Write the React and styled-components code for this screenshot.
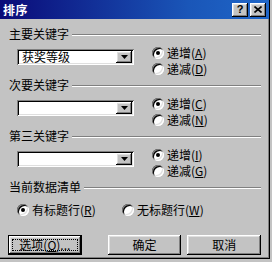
import React from 'react';
import styled, { createGlobalStyle, css } from 'styled-components';

const GlobalStyle = createGlobalStyle`
  html, body {
    margin: 0;
    padding: 0;
    background: #c3c3c3;
  }
  body {
    font-family: "Noto Sans CJK SC", "Liberation Sans", sans-serif;
    font-size: 12px;
    color: #000;
  }
`;

const bevelOut = css`
  box-shadow: inset -1px -1px #000, inset 1px 1px #fff, inset -2px -2px #808080, inset 2px 2px #dfdfdf;
`;

const bevelIn = css`
  box-shadow: inset 1px 1px #808080, inset -1px -1px #fff, inset 2px 2px #000, inset -2px -2px #dfdfdf;
`;

const Window = styled.div`
  width: 270px;
  height: 259px;
  box-sizing: border-box;
  background: #c3c3c3;
  border-right: 1px solid #000;
  border-bottom: 1px solid #000;
  box-shadow: inset -1px -1px #808080;
  display: flex;
  flex-direction: column;
`;

const TitleBar = styled.div`
  height: 19px;
  flex: none;
  display: flex;
  align-items: center;
  padding: 0 3px 0 3px;
  background: linear-gradient(90deg, #0a0a78 0%, #1a56b8 70%, #1f66c8 100%);
`;

const Title = styled.div`
  flex: 1;
  color: #fff;
  font-weight: 700;
  font-size: 12px;
  line-height: 14px;
  letter-spacing: 0.5px;
`;

const TitleButton = styled.div`
  width: 16px;
  height: 14px;
  box-sizing: border-box;
  background: #c3c3c3;
  ${bevelOut};
  display: flex;
  align-items: center;
  justify-content: center;
  margin-left: ${p => p.$gap || 0}px;
  font-family: "Liberation Sans", sans-serif;
  font-weight: 700;
  font-size: 11px;
  line-height: 11px;
  padding-bottom: 1px;
`;

const Content = styled.div`
  padding: 8px 8px 0 8px;
  display: flex;
  flex-direction: column;
`;

const Group = styled.div`
  margin-bottom: 1px;
`;

const Header = styled.div`
  display: flex;
  align-items: center;
  height: 14px;
`;

const HeaderLabel = styled.span`
  font-size: 12px;
  line-height: 14px;
  padding-left: 1px;
`;

const Etch = styled.div`
  flex: 1;
  height: 0;
  margin-left: 3px;
  margin-top: 1px;
  border-top: 1px solid #808080;
  border-bottom: 1px solid #fff;
`;

const GroupBody = styled.div`
  display: flex;
  margin-top: 4px;
  padding-left: 9px;
`;

const Combo = styled.div`
  width: 117px;
  height: 16px;
  margin-top: 4px;
  box-sizing: border-box;
  background: #fff;
  ${bevelIn};
  padding: 2px;
  display: flex;
  align-items: center;
`;

const ComboText = styled.span`
  flex: 1;
  padding-left: 3px;
  font-size: 12px;
  line-height: 12px;
  white-space: nowrap;
`;

const DropButton = styled.div`
  width: 16px;
  height: 12px;
  box-sizing: border-box;
  background: #c3c3c3;
  ${bevelOut};
  display: flex;
  align-items: center;
  justify-content: center;
`;

const RadioColumn = styled.div`
  display: flex;
  flex-direction: column;
  margin-left: 18px;
`;

const RadioRow = styled.div`
  display: flex;
  align-items: center;
  height: 16px;
  width: ${p => (p.$width ? `${p.$width}px` : 'auto')};
  flex: none;
`;

const RadioCircle = styled.span`
  width: 12px;
  height: 12px;
  flex: none;
  border-radius: 50%;
  background: #fff;
  box-shadow: inset 1px 1px #808080, inset -1px -1px #fff, inset 2px 2px #000, inset -2px -2px #dfdfdf;
  display: flex;
  align-items: center;
  justify-content: center;
  &::after {
    content: '';
    width: 4px;
    height: 4px;
    border-radius: 50%;
    background: ${p => (p.$checked ? '#000' : 'transparent')};
  }
`;

const RadioText = styled.span`
  margin-left: 3px;
  font-size: 12px;
  line-height: 14px;
  white-space: nowrap;
`;

const Key = styled.span`
  text-decoration: underline;
  text-underline-offset: 1px;
`;

const ListRow = styled.div`
  display: flex;
  margin-top: 8px;
  padding-left: 9px;
`;

const ButtonRow = styled.div`
  display: flex;
  margin-top: 17px;
`;

const Button = styled.div`
  width: 74px;
  height: 20px;
  box-sizing: border-box;
  background: #c3c3c3;
  margin-left: ${p => p.$gap || 0}px;
  display: flex;
  align-items: center;
  justify-content: center;
  font-size: 12px;
  line-height: 14px;
  white-space: nowrap;
  ${bevelOut};
  ${p => p.$default && css`
    padding: 4px;
    box-shadow: inset 0 0 0 1px #000, inset -2px -2px #000, inset 2px 2px #fff,
      inset -3px -3px #808080, inset 3px 3px #dfdfdf;
  `}
`;

const FocusRect = styled.span`
  width: 100%;
  height: 100%;
  box-sizing: border-box;
  border: 1px dotted #000;
  display: flex;
  align-items: center;
  justify-content: center;
`;

const Arrow = () => (
  <svg width="7" height="4" viewBox="0 0 7 4">
    <polygon points="0,0 7,0 3.5,4" fill="#000" />
  </svg>
);

const CloseGlyph = () => (
  <svg width="8" height="7" viewBox="0 0 8 7">
    <path d="M0.5 0.5 L7.5 6.5 M7.5 0.5 L0.5 6.5" stroke="#000" strokeWidth="1.6" />
  </svg>
);

const Radio = ({ checked, label, mn, width }) => (
  <RadioRow $width={width}>
    <RadioCircle $checked={checked} />
    <RadioText>
      {label}(<Key>{mn}</Key>)
    </RadioText>
  </RadioRow>
);

const keys = [
  { title: '主要关键字', value: '获奖等级', up: 'A', down: 'D' },
  { title: '次要关键字', value: '', up: 'C', down: 'N' },
  { title: '第三关键字', value: '', up: 'I', down: 'G' },
];

export default function App() {
  return (
    <>
      <GlobalStyle />
      <Window>
        <TitleBar>
          <Title>排序</Title>
          <TitleButton>?</TitleButton>
          <TitleButton $gap={2}>
            <CloseGlyph />
          </TitleButton>
        </TitleBar>
        <Content>
          {keys.map(k => (
            <Group key={k.title}>
              <Header>
                <HeaderLabel>{k.title}</HeaderLabel>
                <Etch />
              </Header>
              <GroupBody>
                <Combo>
                  <ComboText>{k.value}</ComboText>
                  <DropButton>
                    <Arrow />
                  </DropButton>
                </Combo>
                <RadioColumn>
                  <Radio checked label="递增" mn={k.up} />
                  <Radio label="递减" mn={k.down} />
                </RadioColumn>
              </GroupBody>
            </Group>
          ))}
          <Header>
            <HeaderLabel>当前数据清单</HeaderLabel>
            <Etch />
          </Header>
          <ListRow>
            <Radio checked label="有标题行" mn="R" width={105} />
            <Radio label="无标题行" mn="W" />
          </ListRow>
          <ButtonRow>
            <Button $default>
              <FocusRect>
                选项(<Key>O</Key>)...
              </FocusRect>
            </Button>
            <Button $gap={26}>确定</Button>
            <Button $gap={6}>取消</Button>
          </ButtonRow>
        </Content>
      </Window>
    </>
  );
}
